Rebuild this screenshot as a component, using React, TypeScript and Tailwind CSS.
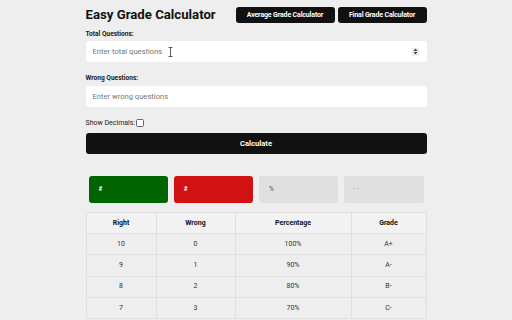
import React from "react";

const rows = [
  ["10", "0", "100%", "A+"],
  ["9", "1", "90%", "A-"],
  ["8", "2", "80%", "B-"],
  ["7", "3", "70%", "C-"],
];

export default function App() {
  return (
    <div className="min-h-screen bg-[#eeeeee] font-['Roboto',sans-serif] text-[#111]">
      <div className="w-[341px] mx-auto">
        <div className="flex items-center justify-between pt-[7px]">
          <h1 className="text-[13.2px] font-bold leading-[16px] text-[#111]">Easy Grade Calculator</h1>
          <div className="flex gap-[3px]">
            <button className="h-[16px] w-[99px] rounded-[3px] bg-[#111] text-white text-[7px] font-bold tracking-[-0.15px]">
              Average Grade Calculator
            </button>
            <button className="h-[16px] w-[89px] rounded-[3px] bg-[#111] text-white text-[7px] font-bold tracking-[-0.15px]">
              Final Grade Calculator
            </button>
          </div>
        </div>
        <div className="mt-[7px] text-[6.6px] font-bold leading-[8px] text-[#222]">Total Questions:</div>
        <div className="relative mt-[3px] h-[21px] bg-white rounded-[3px] flex items-center pl-[7px] pr-[8px]">
          <span className="text-[7.6px] text-[#777]">Enter total questions</span>
          <svg className="ml-[6px]" width="5" height="10" viewBox="0 0 5 10">
            <path d="M0.5 0.5 H4.5 M2.5 0.5 V9.5 M0.5 9.5 H4.5" stroke="#333" strokeWidth="0.8" fill="none" />
          </svg>
          <div className="ml-auto w-[7px] h-[8px] bg-[#eeeeee] flex items-center justify-center">
            <svg width="5" height="7" viewBox="0 0 5 7">
              <path d="M2.5 0.5 L4.5 3 H0.5 Z M0.5 4 H4.5 L2.5 6.5 Z" fill="#444" />
            </svg>
          </div>
        </div>
        <div className="mt-[12px] text-[6.6px] font-bold leading-[8px] text-[#222]">Wrong Questions:</div>
        <div className="mt-[4px] h-[21px] bg-white rounded-[3px] flex items-center pl-[7px]">
          <span className="text-[7.6px] text-[#777]">Enter wrong questions</span>
        </div>
        <div className="mt-[11px] flex items-center h-[9px]">
          <span className="text-[7px] leading-[8px] text-[#222]">Show Decimals:</span>
          <span className="ml-[1px] w-[8px] h-[8px] border border-[#666] rounded-[1.5px] bg-white" />
        </div>
        <button className="mt-[6px] w-full h-[21px] rounded-[3px] bg-[#111] text-white text-[7.6px] font-bold">
          Calculate
        </button>
        <div className="mt-[22px] px-[3px] grid grid-cols-4 gap-[6px]">
          <div className="h-[27px] rounded-[3px] bg-[#006400] flex items-center pl-[10px] text-white text-[6.5px] font-bold">#</div>
          <div className="h-[27px] rounded-[3px] bg-[#d01212] flex items-center pl-[10px] text-white text-[6.5px] font-bold">#</div>
          <div className="h-[27px] rounded-[3px] bg-[#e0e0e0] flex items-center pl-[10px] text-[#555] text-[6.5px]">%</div>
          <div className="h-[27px] rounded-[3px] bg-[#e0e0e0] flex items-center pl-[9px] text-[#999] text-[6.5px]">- -</div>
        </div>
        <table className="mt-[9px] w-full border-collapse text-[7px]">
          <thead>
            <tr className="bg-[#f2f2f2] h-[21px]">
              <th className="w-[70px] border border-[#e0e0e0] font-bold">Right</th>
              <th className="w-[79px] border border-[#e0e0e0] font-bold">Wrong</th>
              <th className="w-[116px] border border-[#e0e0e0] font-bold">Percentage</th>
              <th className="border border-[#e0e0e0] font-bold">Grade</th>
            </tr>
          </thead>
          <tbody>
            {rows.map((r, i) => (
              <tr key={i} className="h-[21.3px]">
                {r.map((c, j) => (
                  <td key={j} className="border border-[#e0e0e0] text-center text-[#333]">{c}</td>
                ))}
              </tr>
            ))}
          </tbody>
        </table>
      </div>
    </div>
  );
}
